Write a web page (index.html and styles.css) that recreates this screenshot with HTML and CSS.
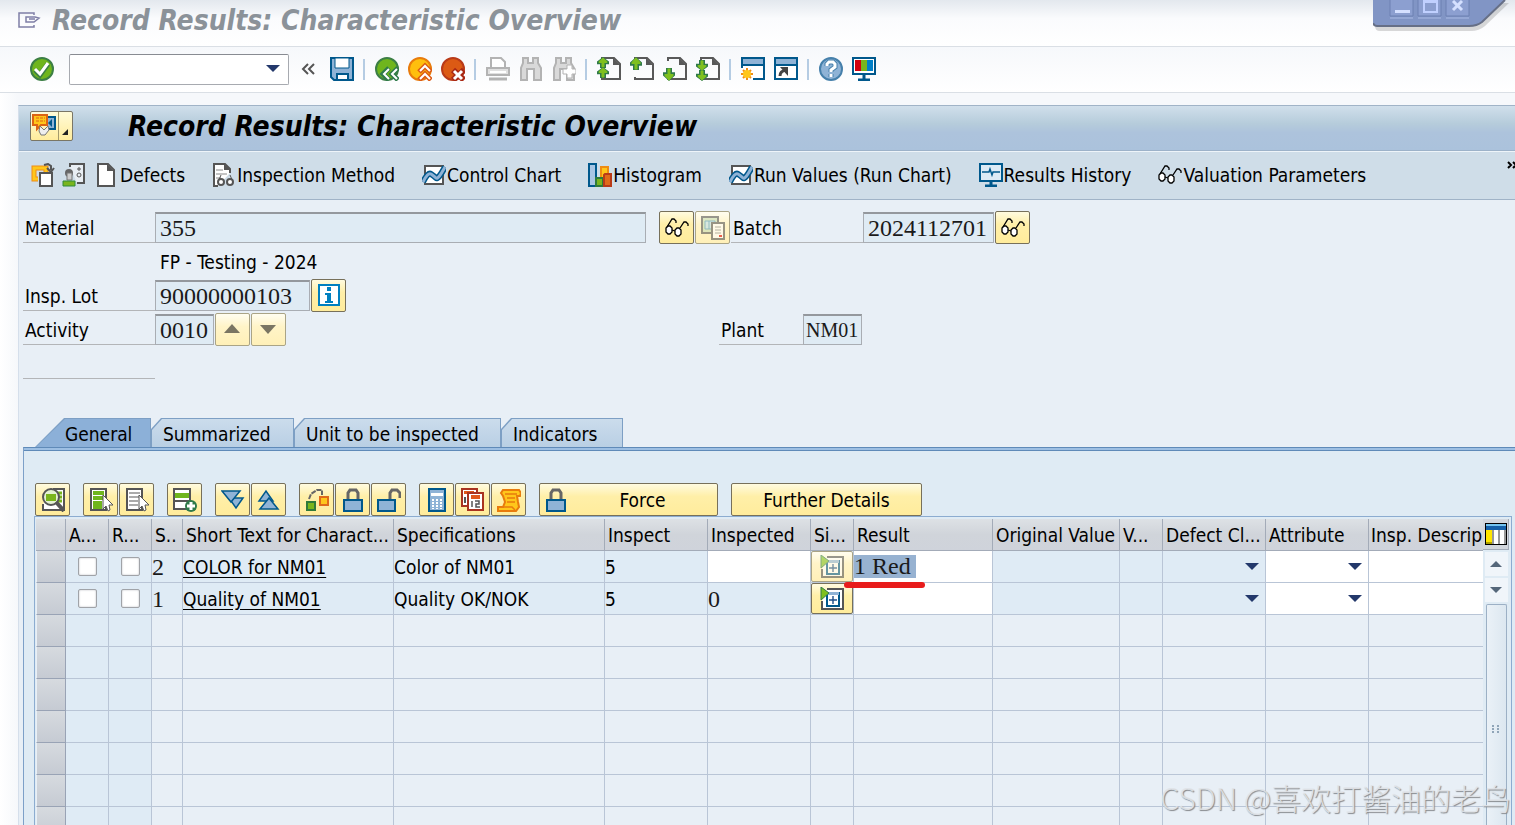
FILE: index.html
```html
<!DOCTYPE html>
<html lang="en">
<head>
    <meta charset="UTF-8">
    <meta name="viewport" content="width=device-width, initial-scale=1.0">
    <title>Record Results: Characteristic Overview</title>
    <link rel="stylesheet" href="styles.css">
</head>
<body>
    <!-- shared icons -->
    <svg class="defs" aria-hidden="true">
        <symbol id="i-glasses" viewBox="0 0 24 24">
            <g fill="#fff" stroke="#000" stroke-width="1.3">
                <path d="M3 10h2l2 2v4l-2 2H3l-2-2v-4z"/>
                <path d="M12 12h2l2 2v4l-2 2h-2l-2-2v-4z"/>
                <path d="M2 11l5-8h2l2 2v2M7 14l3 1M15 12l4-6h2l2 2v2" fill="none"/>
            </g>
        </symbol>
        <symbol id="i-chart" viewBox="0 0 24 24">
            <path d="M3 3h18v18H3z" fill="#fff" stroke="#555" stroke-width="2"/>
            <path d="M1 19q5-10 8-8t5 4 9-11" fill="none" stroke="#00588c" stroke-width="6"/>
            <path d="M1 19q5-10 8-8t5 4 9-11" fill="none" stroke="#8fb3d6" stroke-width="3"/>
        </symbol>
        <symbol id="i-page" viewBox="0 0 24 24">
            <path d="M5 4V1h12l6 6v15H5v-2" fill="none" stroke="#595959" stroke-width="2"/>
            <path d="M16 1v7h7z" fill="#595959"/>
        </symbol>
        <symbol id="i-up" viewBox="0 0 12 12" preserveAspectRatio="none">
            <path d="M6 0l6 5v3H9v4H3V8H0V5z" fill="#2f7a4a"/>
            <path d="M6 1l4 4v1H7v5H5V6H2V5z" fill="#7fc01f" stroke="#7fc01f"/>
        </symbol>
        <symbol id="i-binoc" viewBox="0 0 24 24">
            <path d="M4 1h5v5h5V1h5v5l3 5v12h-7V12H8v11H2V11l2-5z" fill="#d9d9d9" stroke="#b3b3b3" stroke-width="2"/>
        </symbol>
        <symbol id="i-insert" viewBox="0 0 24 24">
            <path d="M7 2h16v20H2v-8" fill="#fff" stroke="#555" stroke-width="2"/>
            <path d="M7 6h12v13H7z" fill="#fff" stroke="#00588c" stroke-width="2"/>
            <path d="M7 5h12v3H7z" fill="#8fb3d6"/>
            <path d="M13 9v8M9 13h8" stroke="#1e4f8a" stroke-width="1.4"/>
            <path d="M1 0l8 6-8 7z" fill="#7fc01f" stroke="#2f7a4a"/>
        </symbol>
        <symbol id="i-lock" viewBox="0 0 24 24">
            <path d="M7 11V5l2-3h6l2 3v6" fill="none" stroke="#666" stroke-width="3"/>
            <path d="M3 12h18v11H3z" fill="#8fb3d6" stroke="#00588c" stroke-width="2"/>
        </symbol>
    </svg>

    <header class="titlebar">
        <svg class="exit-icon" viewBox="0 0 24 18"><path d="M17 4V2H2v14h15v-2M9 6h9l4 1-5 4H9zM12 8h6" fill="none" stroke="#7f7fa6" stroke-width="1.500"/></svg>
        <h1>Record Results: Characteristic Overview</h1>
    </header>

    <div class="window-controls">
        <svg viewBox="0 0 142 34">
            <path d="M2 0v23q0 5 5 5h91q8 0 14-5l24-23z" fill="#666" opacity=".25" transform="translate(0 3)"/>
            <path d="M0 0v22q0 4 4 4h92q8 0 13-4l23-22z" fill="#8195c5"/>
            <path d="M0 23q1 3 4 3h92q8 0 13-4l23-22" fill="none" stroke="#666f86" stroke-width="2"/>
            <path d="M17 0v16h23V0M45 0v16h23V0M73 0v16h23V0" fill="#8c9fd0" stroke="#6d80b2"/>
            <path d="M17 18h23M45 18h23M73 18h23" stroke="#a9bae4"/>
            <path d="M22 11.500h15" stroke="#d5e0ff" stroke-width="3"/>
            <path d="M51 1h13v11H51zM51 2h13" fill="none" stroke="#c0d0ff" stroke-width="2"/>
            <path d="M80 1l9 9M89 1l-9 9" stroke="#d5e0ff" stroke-width="3"/>
        </svg>
    </div>

    <nav class="toolbar" aria-label="System toolbar">
        <button aria-label="Enter"><svg viewBox="0 0 24 24"><circle cx="12" cy="12" r="11" fill="#6fb51d" stroke="#3c7f45" stroke-width="2"/><path d="M5 13l5 5L18 7" fill="none" stroke="#3c7f45" stroke-width="5"/><path d="M5 12l5 5L18 6" fill="none" stroke="#fff" stroke-width="3"/></svg></button>
        <span class="command"><select aria-label="Command"><option></option></select></span>
        <button class="collapse" aria-label="Collapse"><svg viewBox="0 0 15 12"><path d="M7 1L2 6l5 5M13 1L8 6l5 5" fill="none" stroke="#555" stroke-width="2"/></svg></button>
        <button aria-label="Save"><svg viewBox="0 0 24 24"><path d="M1 1h22v22H4l-3-3z" fill="#8fb3d6" stroke="#00588c" stroke-width="2"/><path d="M5 1h14v10H5z" fill="#fff" stroke="#00588c"/><path d="M7 17h11v6H7z" fill="#fff" stroke="#00588c" stroke-width="2"/></svg></button>
        <i class="sep"></i>
        <button aria-label="Back"><svg viewBox="0 0 24 24"><circle cx="12" cy="12" r="11" fill="#6fb51d" stroke="#3c7f45" stroke-width="2"/><path d="M14 11l-6 6 6 6M23 11l-6 6 6 6" fill="none" stroke="#2f7a4a" stroke-width="5"/><path d="M14 12l-5 5 5 5M22 12l-5 5 5 5" fill="none" stroke="#fff" stroke-width="2"/></svg></button>
        <button aria-label="Exit"><svg viewBox="0 0 24 24"><circle cx="12" cy="12" r="11" fill="#ffbf0d" stroke="#e87b0c" stroke-width="2"/><path d="M11 15l6-6 6 6M11 23l6-6 6 6" fill="none" stroke="#dc5a14" stroke-width="5"/><path d="M12 14l5-5 5 5M12 22l5-5 5 5" fill="none" stroke="#fff" stroke-width="2"/></svg></button>
        <button aria-label="Cancel"><svg viewBox="0 0 24 24"><circle cx="12" cy="12" r="11" fill="#dc5a14" stroke="#b93a18" stroke-width="2"/><path d="M12 13l11 10M23 13L12 23" stroke="#a92814" stroke-width="6"/><path d="M13 14l8 8M21 14l-8 8" stroke="#fff" stroke-width="3"/></svg></button>
        <i class="sep"></i>
        <button aria-label="Print"><svg viewBox="0 0 24 24"><path d="M5 11V1h10l4 4v6" fill="#fff" stroke="#b3b3b3" stroke-width="2"/><path d="M1 11h22v7H1z" fill="#e0e0e0" stroke="#b3b3b3" stroke-width="2"/><path d="M4 15h16" stroke="#fff" stroke-width="2"/><path d="M3 22h18" stroke="#b3b3b3" stroke-width="3"/></svg></button>
        <button aria-label="Find"><svg viewBox="0 0 24 24"><use href="#i-binoc"/></svg></button>
        <button aria-label="Find next"><svg viewBox="0 0 24 24"><use href="#i-binoc"/><path d="M15 8h5v4h4v5h-4v4h-5v-4h-4v-5h4z" fill="#fff" stroke="#b3b3b3"/></svg></button>
        <i class="sep"></i>
        <button aria-label="First page"><svg viewBox="0 0 24 24"><use href="#i-page"/><use href="#i-up" width="12" height="11"/><use href="#i-up" y="10" width="12" height="11"/></svg></button>
        <button aria-label="Previous page"><svg viewBox="0 0 24 24"><use href="#i-page"/><use href="#i-up" width="12" height="13"/></svg></button>
        <button aria-label="Next page"><svg viewBox="0 0 24 24"><use href="#i-page"/><use href="#i-up" width="12" height="13" transform="translate(0 24) scale(1 -1)"/></svg></button>
        <button aria-label="Last page"><svg viewBox="0 0 24 24"><use href="#i-page"/><use href="#i-up" width="12" height="11" transform="translate(0 14) scale(1 -1)"/><use href="#i-up" width="12" height="11" transform="translate(0 24) scale(1 -1)"/></svg></button>
        <i class="sep"></i>
        <button aria-label="New session"><svg viewBox="0 0 24 24"><path d="M1 11V1h22v21H12" fill="#fff" stroke="#00588c" stroke-width="2"/><path d="M2 2h20v6H2z" fill="#8fb3d6"/><path d="M1 8h22" stroke="#00588c" stroke-width="2"/><path d="M6 11v12M0 17h12M2 13l8 8M10 13l-8 8" stroke="#f08c14" stroke-width="2"/><circle cx="6" cy="17" r="4" fill="#ffc61a"/></svg></button>
        <button aria-label="Shortcut"><svg viewBox="0 0 24 24"><path d="M1 1h22v21H1z" fill="#fff" stroke="#00588c" stroke-width="2"/><path d="M2 2h20v6H2z" fill="#8fb3d6"/><path d="M1 8h22" stroke="#00588c" stroke-width="2"/><path d="M6 19q0-5 6-6" fill="none" stroke="#444" stroke-width="3"/><path d="M6 10h8v9z" fill="#444"/></svg></button>
        <i class="sep"></i>
        <button aria-label="Help"><svg viewBox="0 0 24 24"><circle cx="12" cy="12" r="11" fill="#8fb3d6" stroke="#4680ab" stroke-width="2"/><path d="M8 9V7l2-2h4l2 2v3l-4 3v2M12 17v3" fill="none" stroke="#4680ab" stroke-width="5"/><path d="M8 9V7l2-2h4l2 2v3l-4 3v2M12 17v3" fill="none" stroke="#fff" stroke-width="3"/></svg></button>
        <button aria-label="Customize layout"><svg viewBox="0 0 24 24"><path d="M1 1h22v16H1z" fill="#fff" stroke="#00588c" stroke-width="2"/><path d="M3 3h6v11H3z" fill="#d00010"/><path d="M9 3h6v11H9z" fill="#7ab51d"/><path d="M15 3h6v11h-6z" fill="#0080c8"/><path d="M12 17v5M6 23h12" stroke="#00588c" stroke-width="3"/></svg></button>
    </nav>

    <main class="frame">
        <div class="screen-title">
            <button class="services" aria-label="Services for object">
                <svg viewBox="0 0 24 24"><path d="M14 3h9v12h-7" fill="#8fb3d6" stroke="#00588c" stroke-width="2"/><path d="M20 5v8l-4-4z" fill="#00588c"/><path d="M1 1h14v10H9l-4 4v-4H1z" fill="#ffc61a" stroke="#dc6414" stroke-width="2"/><path d="M4 4h9M4 7h9" stroke="#dc6414" stroke-dasharray="3 1"/><path d="M8 12l4 4 4-4 1 4-4 5H9l-2-4z" fill="#eee" stroke="#777"/></svg>
                <span class="corner"></span>
            </button>
            <h2>Record Results: Characteristic Overview</h2>
        </div>

        <nav class="app-toolbar" aria-label="Application toolbar">
            <div class="icon-pair">
                <button aria-label="Choose"><svg viewBox="0 0 24 24"><path d="M7 16H3V5h12v4" fill="none" stroke="#ee8c14" stroke-width="5"/><path d="M7 16H3V5h12v4" fill="none" stroke="#ffc61a" stroke-width="3"/><path d="M9 10h12v13H9z" fill="#fff" stroke="#555" stroke-width="2"/><path d="M13 2l4-1 3 2v4M16 5l4 4 3-4" fill="none" stroke="#555" stroke-width="2"/></svg></button>
                <button aria-label="User"><svg viewBox="0 0 24 24"><path d="M8 4V1h14v19h-7" fill="#e9eef3" stroke="#555" stroke-width="2"/><path d="M17 4v4M15 6h4" stroke="#555"/><circle cx="17" cy="12" r="2" fill="none" stroke="#555"/><circle cx="7" cy="10" r="4" fill="#666"/><path d="M5 10h5v7H5z" fill="#ccc" stroke="#777"/><path d="M1 18h12v5H1z" fill="#7ab51d" stroke="#2f8a3a"/></svg></button>
            </div>
            <button><svg class="sheet" viewBox="0 0 20 24"><path d="M2 1h10l6 6v16H2z" fill="#fff" stroke="#555" stroke-width="2"/><path d="M11 1v7h7z" fill="#555"/></svg>Defects</button>
            <button><svg viewBox="0 0 24 24"><path d="M6 23H2V1h11l5 5v4" fill="#fff" stroke="#555" stroke-width="2"/><path d="M12 1v6h7z" fill="#555"/><path d="M4 7h7M4 11h11M4 15h5" stroke="#888"/><path d="M9 12l-3 7M18 12l3 7" stroke="#555" fill="none"/><g fill="#fff" stroke="#555" stroke-width="2"><circle cx="9" cy="19" r="3"/><circle cx="18" cy="19" r="3"/></g></svg>Inspection Method</button>
            <button><svg viewBox="0 0 24 24"><use href="#i-chart"/></svg>Control Chart</button>
            <button><svg viewBox="0 0 24 24"><path d="M1 1h7v22H1z" fill="#a9c6e4" stroke="#00588c" stroke-width="2"/><path d="M13 4h7v13h-7z" fill="#ffc61a" stroke="#ee8c14" stroke-width="2"/><path d="M8 15h7v8H8z" fill="#7ab51d" stroke="#2f7a3a" stroke-width="2"/><path d="M17 11h6v12h-7V12z" fill="#e06a1a" stroke="#b93a18" stroke-width="2"/></svg>Histogram</button>
            <button><svg viewBox="0 0 24 24"><use href="#i-chart"/></svg>Run Values (Run Chart)</button>
            <button><svg viewBox="0 0 24 24"><path d="M1 1h22v17H1z" fill="#dceaf5" stroke="#00588c" stroke-width="2"/><path d="M3 9h7l1-3 2 6 1-3h7" fill="none" stroke="#00588c" stroke-width="1.500"/><path d="M12 18v4M6 23h12" stroke="#00588c" stroke-width="3"/></svg>Results History</button>
            <button><svg viewBox="0 0 24 24"><use href="#i-glasses"/></svg>Valuation Parameters</button>
            <button class="more" aria-label="More"><svg viewBox="0 0 10 8"><path d="M1 1l3 3-3 3M6 1l3 3-3 3" fill="none" stroke="#000" stroke-width="2"/></svg></button>
        </nav>

        <form class="details">
            <div class="row">
                <label for="material">Material</label>
                <input id="material" class="field w-long" value="355" readonly>
                <div class="buttons spaced">
                    <button type="button" class="btn" aria-label="Display material"><svg viewBox="0 0 24 24"><use href="#i-glasses"/></svg></button>
                    <button type="button" class="btn off" aria-label="Documents"><svg viewBox="0 0 24 24"><path d="M1 1h16v16H1z" fill="#c8ddb4" stroke="#555" stroke-width="2"/><path d="M4 5h10v8H4zM8 5v8" fill="#bfe0ec" stroke="#4b96b8"/><path d="M11 7h12v16H11z" fill="#fff" stroke="#555" stroke-width="2"/><path d="M14 11h6M14 14h6M14 17h6" stroke="#888"/><path d="M18 19h3v2h-3z" fill="#d00"/></svg></button>
                </div>
                <label for="batch">Batch</label>
                <input id="batch" class="field w-batch" value="2024112701" readonly>
                <div class="buttons">
                    <button type="button" class="btn" aria-label="Display batch"><svg viewBox="0 0 24 24"><use href="#i-glasses"/></svg></button>
                </div>
            </div>
            <div class="row"><p class="material-text">FP - Testing - 2024</p></div>
            <div class="row">
                <label for="lot">Insp. Lot</label>
                <input id="lot" class="field w-lot" value="90000000103" readonly>
                <div class="buttons">
                    <button type="button" class="btn" aria-label="Lot information"><svg viewBox="0 0 24 24"><path d="M2 1h20v20H2z" fill="#fff" stroke="#0080c0" stroke-width="2"/><path d="M10 3h4v4h-4zM8 9h6v8h2v2H8v-2h2v-6H8z" fill="#0080c0"/></svg></button>
                </div>
            </div>
            <div class="row">
                <label for="activity">Activity</label>
                <input id="activity" class="field w-short" value="0010" readonly>
                <div class="buttons">
                    <button type="button" class="btn off" aria-label="Previous activity"><svg viewBox="0 0 24 24"><path d="M3 15L11 6l8 9z" fill="#222"/></svg></button>
                    <button type="button" class="btn off" aria-label="Next activity"><svg viewBox="0 0 24 24"><path d="M3 7l8 9 8-9z" fill="#222"/></svg></button>
                </div>
                <label for="plant" class="plant-label">Plant</label>
                <input id="plant" class="field w-short plant" value="NM01" readonly>
            </div>
            <div class="row"><span class="rule"></span></div>
        </form>

        <div class="tabs" role="tablist">
            <button class="tab active" role="tab" aria-selected="true">General</button>
            <button class="tab w-summarized" role="tab">Summarized</button>
            <button class="tab w-unit" role="tab">Unit to be inspected</button>
            <button class="tab w-indicators" role="tab">Indicators</button>
        </div>

        <section class="panel">
            <div class="panel-toolbar">
                <div class="buttons">
                    <button class="btn" aria-label="Details"><svg viewBox="0 0 24 24"><path d="M12 1h11v21H2v-6" fill="#fff" stroke="#555" stroke-width="2"/><path d="M14 5h7M14 9h7M14 13h7" stroke="#7ab51d" stroke-width="3"/><circle cx="10" cy="9" r="8" fill="#e4f2d2" stroke="#555" stroke-width="2"/><path d="M5 6h10v7H5z" fill="#7ab51d"/><path d="M15 14l8 9" stroke="#555" stroke-width="4"/></svg></button>
                </div>
                <div class="buttons">
                    <button class="btn" aria-label="Select all"><svg viewBox="0 0 24 24"><path d="M2 1h15v21H2z" fill="#fff" stroke="#555" stroke-width="2"/><path d="M4 5h11M4 10h11M4 15h9M4 19h9" stroke="#6fb51d" stroke-width="4"/><path d="M14 7v14l3-3 2 5 2-1-1-5h4z" fill="#fff" stroke="#555"/></svg></button>
                    <button class="btn" aria-label="Deselect all"><svg viewBox="0 0 24 24"><path d="M2 1h15v21H2z" fill="#fff" stroke="#555" stroke-width="2"/><path d="M4 5h11M4 9h11M4 13h9M4 17h9" stroke="#aaa" stroke-width="2"/><path d="M14 7v14l3-3 2 5 2-1-1-5h4z" fill="#fff" stroke="#555"/></svg></button>
                </div>
                <div class="buttons">
                    <button class="btn" aria-label="Insert row"><svg viewBox="0 0 24 24"><path d="M1 1h16v20H1z" fill="#fff" stroke="#555" stroke-width="2"/><path d="M2 5h14v5H2z" fill="#6fb51d"/><path d="M1 13h16" stroke="#555" stroke-width="2"/><circle cx="18" cy="18" r="6" fill="#2f7a4a"/><path d="M18 14v8M14 18h8" stroke="#fff" stroke-width="3"/></svg></button>
                </div>
                <div class="buttons">
                    <button class="btn" aria-label="Next characteristic"><svg viewBox="0 0 24 24"><g fill="#8fb3d6" stroke="#00588c" stroke-width="1.500"><path d="M8 10h14l-7 10z"/><path d="M1 3h18l-9 11z"/></g></svg></button>
                    <button class="btn" aria-label="Previous characteristic"><svg viewBox="0 0 24 24"><g fill="#8fb3d6" stroke="#00588c" stroke-width="1.500"><path d="M2 13h14L9 3z"/><path d="M3 21h18l-9-11z"/></g></svg></button>
                </div>
                <div class="buttons">
                    <button class="btn" aria-label="Replace"><svg viewBox="0 0 24 24"><path d="M2 14h8v8H2z" fill="#7ab51d" stroke="#2f7a3a" stroke-width="2"/><path d="M15 9h8v8h-8z" fill="#ffc61a" stroke="#e06a1a" stroke-width="2"/><path d="M4 11l2-5 6-4h5v5" fill="none" stroke="#666" stroke-width="2" stroke-dasharray="5 1"/></svg></button>
                    <button class="btn" aria-label="Lock"><svg viewBox="0 0 24 24"><use href="#i-lock"/></svg></button>
                    <button class="btn" aria-label="Unlock"><svg viewBox="0 0 24 24"><path d="M13 11V5l2-3h5l3 3v5" fill="none" stroke="#666" stroke-width="3"/><path d="M1 12h17v11H1z" fill="#8fb3d6" stroke="#00588c" stroke-width="2"/></svg></button>
                </div>
                <div class="buttons">
                    <button class="btn" aria-label="Calculate"><svg viewBox="0 0 24 24"><path d="M4 1h16v22H4z" fill="#8fb3d6" stroke="#00588c" stroke-width="2"/><path d="M6 5h12v3H6z" fill="#fff"/><path d="M8 11v10M12 11v10M16 11v10" stroke="#fff" stroke-width="2" stroke-dasharray="2 1"/></svg></button>
                    <button class="btn" aria-label="Dates"><svg viewBox="0 0 24 24"><path d="M1 1h15v17H1z" fill="#fff" stroke="#a93320" stroke-width="2"/><path d="M3 3h10v3H3z" fill="#e0581a"/><path d="M4 9v6" stroke="#555" stroke-width="2"/><path d="M7 5h15v17H7z" fill="#fff" stroke="#a93320" stroke-width="2"/><path d="M10 7h9v4h-9z" fill="#e0581a"/><path d="M11 13v6M14 13h4v3h-3v3h4" fill="none" stroke="#555" stroke-width="1.500"/></svg></button>
                    <button class="btn" aria-label="Log"><svg viewBox="0 0 24 24"><path d="M6 2h16l2 3-1 3h-3l1 6 1 5-3 4H1v-4h5l2-5-2-6-2-3z" fill="#ffc61a" stroke="#e87b0c" stroke-width="2"/><path d="M8 6h12M10 10h8M10 14h8M2 19h13l3 3" fill="none" stroke="#e87b0c" stroke-width="1.500"/></svg></button>
                </div>
                <button class="btn text-btn force"><svg viewBox="0 0 24 24"><use href="#i-lock"/></svg><span>Force</span></button>
                <button class="btn text-btn">Further Details</button>
            </div>

            <div class="grid">
                <div class="table-wrap">
                    <table>
                        <colgroup>
                            <col class="c-sel"><col class="c-tiny"><col class="c-tiny"><col class="c-s"><col class="c-text"><col class="c-text"><col class="c-mid"><col class="c-mid"><col class="c-tiny"><col class="c-result"><col class="c-orig"><col class="c-tiny"><col class="c-mid"><col class="c-mid"><col>
                        </colgroup>
                        <thead>
                            <tr>
                                <th></th><th>A...</th><th>R...</th><th>S..</th><th>Short Text for Charact...</th><th>Specifications</th><th>Inspect</th><th>Inspected</th><th>Si...</th><th>Result</th><th>Original Value</th><th>V...</th><th>Defect Cl...</th><th>Attribute</th><th>Insp. Descrip</th>
                            </tr>
                        </thead>
                        <tbody>
                            <tr class="filled">
                                <td></td>
                                <td><input type="checkbox" aria-label="Accept row 2"></td>
                                <td><input type="checkbox" aria-label="Reject row 2"></td>
                                <td class="num">2</td>
                                <td><a href="#">COLOR for NM01</a></td>
                                <td>Color of NM01</td>
                                <td>5</td>
                                <td class="edit"></td>
                                <td><button class="btn cell-btn off" aria-label="Single results"><svg viewBox="0 0 24 24"><use href="#i-insert"/></svg></button></td>
                                <td class="edit marked"><input class="result" value="1 Red" aria-label="Result"></td>
                                <td></td>
                                <td></td>
                                <td><span class="drop"><select aria-label="Defect class"><option></option></select></span></td>
                                <td class="edit"><span class="drop"><select aria-label="Attribute"><option></option></select></span></td>
                                <td class="edit"></td>
                            </tr>
                            <tr class="filled">
                                <td></td>
                                <td><input type="checkbox" aria-label="Accept row 1"></td>
                                <td><input type="checkbox" aria-label="Reject row 1"></td>
                                <td class="num">1</td>
                                <td><a href="#">Quality of NM01</a></td>
                                <td>Quality OK/NOK</td>
                                <td>5</td>
                                <td class="num">0</td>
                                <td><button class="btn cell-btn" aria-label="Single results"><svg viewBox="0 0 24 24"><use href="#i-insert"/></svg></button></td>
                                <td class="edit"></td>
                                <td></td>
                                <td></td>
                                <td><span class="drop"><select aria-label="Defect class"><option></option></select></span></td>
                                <td class="edit"><span class="drop"><select aria-label="Attribute"><option></option></select></span></td>
                                <td class="edit"></td>
                            </tr>
                            <tr><td></td><td></td><td></td><td></td><td></td><td></td><td></td><td></td><td></td><td></td><td></td><td></td><td></td><td></td><td></td></tr>
                            <tr><td></td><td></td><td></td><td></td><td></td><td></td><td></td><td></td><td></td><td></td><td></td><td></td><td></td><td></td><td></td></tr>
                            <tr><td></td><td></td><td></td><td></td><td></td><td></td><td></td><td></td><td></td><td></td><td></td><td></td><td></td><td></td><td></td></tr>
                            <tr><td></td><td></td><td></td><td></td><td></td><td></td><td></td><td></td><td></td><td></td><td></td><td></td><td></td><td></td><td></td></tr>
                            <tr><td></td><td></td><td></td><td></td><td></td><td></td><td></td><td></td><td></td><td></td><td></td><td></td><td></td><td></td><td></td></tr>
                            <tr><td></td><td></td><td></td><td></td><td></td><td></td><td></td><td></td><td></td><td></td><td></td><td></td><td></td><td></td><td></td></tr>
                            <tr><td></td><td></td><td></td><td></td><td></td><td></td><td></td><td></td><td></td><td></td><td></td><td></td><td></td><td></td><td></td></tr>
                        </tbody>
                    </table>
                </div>
                <div class="side">
                    <button class="config" aria-label="Configuration"><svg viewBox="0 0 22 22"><path d="M0 0h22v22H0z"/><path d="M1 1h20v20H1z" fill="#fff"/><path d="M1 1h20v2H1z" fill="#74c4f0"/><path d="M1 3h20v4H1z" fill="#1560a8"/><path d="M1 7h6v12H1z" fill="#ffe600"/><path d="M1 19h6v2H1z" fill="#b0a000"/><path d="M8 7v14M14 7v14M20 7v14" stroke="#999" stroke-width="2"/></svg></button>
                    <button class="scroll" aria-label="Scroll up"><svg viewBox="0 0 12 8"><path d="M0 7l6-6 6 6z" fill="#55677a"/></svg></button>
                    <button class="scroll" aria-label="Scroll down"><svg viewBox="0 0 12 8"><path d="M0 1l6 6 6-6z" fill="#55677a"/></svg></button>
                    <div class="thumb"><svg viewBox="0 0 8 8"><path d="M1 0v8M6 0v8" stroke="#90a5b8" stroke-width="2" stroke-dasharray="2 1"/></svg></div>
                </div>
            </div>
        </section>
    </main>
    <div class="watermark">CSDN @喜欢打酱油的老鸟</div>
</body>
</html>
```
FILE: styles.css
```css
* {
    box-sizing: border-box;
}

body {
    position: relative;
    display: flex;
    flex-direction: column;
    height: 100vh;
    margin: 0;
    overflow: hidden;
    background: linear-gradient(to right, #ffffff, #f6f8fb 18px);
    color: #000;
    font-family: "DejaVu Sans Condensed", "Noto Sans", sans-serif;
    font-size: 19px;
}

button, select, input {
    font: inherit;
    color: inherit;
    margin: 0;
    padding: 0;
}

button {
    display: flex;
    align-items: center;
    border: 0;
    background: none;
    white-space: nowrap;
}

svg {
    display: block;
    width: 24px;
    height: 24px;
    flex-shrink: 0;
}

h1, h2 {
    margin: 0;
    font-size: 28px;
    font-style: italic;
    font-weight: bold;
    white-space: nowrap;
}

.defs {
    position: absolute;
    width: 0;
    height: 0;
}

.titlebar {
    display: flex;
    align-items: center;
    gap: 11px;
    height: 47px;
    padding: 0 17px 6px;
    border-bottom: 1px solid #dadfe5;
    background: linear-gradient(#e3e8ee, #fafbfd 40%, #ffffff);
}

.titlebar h1 {
    color: #8b9299;
}

.exit-icon {
    height: 18px;
}

.window-controls {
    position: absolute;
    top: 0;
    right: 0;
}

.window-controls svg {
    width: 142px;
    height: 34px;
}

.toolbar {
    display: flex;
    align-items: center;
    gap: 9px;
    height: 46px;
    padding: 0 30px 1px;
    border-bottom: 1px solid #dadfe5;
    background: linear-gradient(#f6f8fb, #ffffff);
}

.sep {
    width: 3px;
    height: 21px;
    border-left: 2px solid #b5cce3;
}

.command {
    position: relative;
    width: 220px;
    height: 31px;
    margin: 0 3px 0 6px;
}

.command select {
    width: 100%;
    height: 100%;
    border: 1px solid #a7aab0;
    border-top-color: #888b92;
    border-radius: 2px;
    background: #fff;
    appearance: none;
}

.command::after, .drop::after {
    content: "";
    position: absolute;
    top: 11px;
    right: 9px;
    border: 7px solid transparent;
    border-top-color: #23386b;
    border-bottom: 0;
    pointer-events: none;
}

.collapse {
    margin-right: 5px;
}

.collapse svg {
    width: 15px;
    height: 12px;
}

.frame {
    flex: 1;
    display: flex;
    flex-direction: column;
    min-height: 0;
    margin: 12px 0 0 18px;
    border: 1px solid #a0b3c7;
    border-right: 0;
    border-bottom: 0;
    border-left-color: #d5dfeb;
    background: #e8eff6;
}

.screen-title {
    display: flex;
    align-items: center;
    gap: 55px;
    height: 45px;
    padding: 0 11px 4px;
    border-bottom: 1px solid #9db2c9;
    background: linear-gradient(#d0dfeb, #b6ccdb 40%, #adc3dc 60%, #abc2dc);
}

.services {
    height: 30px;
    width: 43px;
    padding-left: 1px;
    border: 1px solid #7a7666;
    border-radius: 2px;
    background: linear-gradient(#fffbd8, #ffec9c);
}

.corner {
    display: flex;
    align-items: flex-end;
    align-self: stretch;
    margin-left: 2px;
    padding-left: 3px;
    border-left: 1px solid #a39a6c;
}

.corner::after {
    content: "";
    margin-bottom: 5px;
    border-left: 6px solid transparent;
    border-bottom: 6px solid #222;
}

.app-toolbar {
    display: flex;
    align-items: center;
    gap: 27px;
    height: 49px;
    padding: 0 0 1px 12px;
    border-top: 1px solid #eef4f9;
    border-bottom: 1px solid #a0b3c7;
    background: #cfdde8;
    overflow: hidden;
}

.app-toolbar button {
    gap: 1px;
}

.icon-pair {
    display: flex;
    gap: 7px;
    margin-right: -17px;
}

.app-toolbar .sheet {
    width: 20px;
    margin-right: 3px;
}

.app-toolbar .more {
    align-self: flex-start;
    margin: 9px -2px 0 auto;
}

.more svg {
    width: 10px;
    height: 8px;
}

.details {
    display: flex;
    flex-direction: column;
    gap: 1px;
    padding: 11px 0 38px 4px;
}

.row {
    display: flex;
    align-items: center;
    height: 33px;
}

.row label, .rule {
    width: 132px;
    height: 31px;
    padding-left: 2px;
    border-bottom: 1px solid #b3b5b8;
    line-height: 32px;
}

.field {
    height: 31px;
    padding: 0 4px;
    border: 1px solid #a9adb3;
    border-top: 2px solid #94989d;
    background: #dfebf4;
    color: #1a1a1a;
    font-family: "Liberation Serif", serif;
    font-size: 24px;
    outline: 0;
}

.w-long {
    width: 491px;
}

.w-batch {
    width: 131px;
}

.w-lot {
    width: 155px;
}

.w-short {
    width: 59px;
}

.plant {
    padding: 0 2px;
    font-size: 20px;
}

.row .plant-label {
    width: 84px;
    margin-left: 432px;
}

.material-text {
    margin: 0 0 0 137px;
}

.buttons {
    display: flex;
    gap: 1px;
    margin: 0 1px;
}

.buttons.spaced {
    margin-left: 13px;
}

.btn {
    justify-content: center;
    width: 35px;
    height: 33px;
    border: 1px solid #77705a;
    border-radius: 2px;
    background: linear-gradient(#fffbe0, #ffefa8 40%, #ffec9c);
}

.btn.off {
    border-color: #aaa486;
    background: linear-gradient(#fffdf0, #fff4c8 40%, #fff0b8);
}

.off svg {
    opacity: 0.6;
}

.tabs {
    display: flex;
    padding-left: 16px;
}

.tab {
    position: relative;
    z-index: 0;
    height: 29px;
    padding: 2px 0 0 12px;
}

.tab::before, .tab::after {
    content: "";
    position: absolute;
    z-index: -1;
    inset: 0;
    background: #7d9fc4;
    clip-path: polygon(0 11px, 10px 0, 100% 0, 100% 100%, 0 100%);
}

.tab::after {
    inset: 1px 1px 0 1px;
    background: linear-gradient(#cbdcec, #b9cfe4);
}

.tab.active {
    width: 116px;
    padding-left: 30px;
}

.tab.active::before, .tab.active::after {
    clip-path: polygon(0 100%, 29px 0, 100% 0, 100% 100%);
}

.tab.active::after {
    background: #8cb0d8;
}

.w-summarized {
    width: 143px;
}

.w-unit {
    width: 207px;
}

.w-indicators {
    width: 122px;
}

.panel {
    flex: 1;
    display: flex;
    flex-direction: column;
    min-height: 0;
    margin-left: 4px;
    padding: 35px 3px 0 10px;
    border-top: 1px solid #5f8ab8;
    border-left: 1px solid #7da0c8;
    background: linear-gradient(#9dbfe3 2px, #5f8ab8 2px, #5f8ab8 3px, #dfebf4 3px);
}

.panel-toolbar {
    display: flex;
    gap: 13px;
    padding-left: 1px;
}

.panel-toolbar .buttons {
    margin: 0;
}

.text-btn {
    width: 191px;
}

.force {
    justify-content: flex-start;
    width: 179px;
    padding-left: 4px;
}

.force span {
    flex: 1;
    text-align: center;
}

.grid {
    flex: 1;
    display: flex;
    min-height: 0;
    padding: 2px 0 0 1px;
    border: 1px solid #8cacd0;
    border-bottom: 0;
}

.table-wrap {
    flex: 1;
    min-width: 0;
    overflow: hidden;
}

table {
    width: 100%;
    table-layout: fixed;
    border-collapse: separate;
    border-spacing: 0;
}

.c-sel { width: 30px; }
.c-tiny { width: 43px; }
.c-s { width: 31px; }
.c-text { width: 211px; }
.c-mid { width: 103px; }
.c-result { width: 139px; }
.c-orig { width: 127px; }

th, td {
    height: 32px;
    padding: 0;
    border-right: 1px solid #b9c5d6;
    border-bottom: 1px solid #b9c5d6;
    background: #e8eff6;
    overflow: hidden;
    white-space: nowrap;
    text-align: left;
    line-height: 24px;
}

th {
    padding-left: 3px;
    border-color: #a3abb8;
    background: linear-gradient(#dde1e5, #d0d4da 50%, #cfd3db);
    font-weight: normal;
}

th:last-child {
    padding-left: 2px;
}

td:first-child {
    border-color: #99a3b5;
    border-left: 1px solid #e8eff6;
    background: linear-gradient(#d6dadf, #c6cbd3);
}

td:nth-child(2), td:nth-child(3), .filled td:not(:first-child) {
    background: #dfebf5;
}

.filled td.edit {
    background: #fff;
}

th:last-child, td:last-child {
    border-right: 0;
}

td a {
    color: inherit;
    text-underline-offset: 3px;
}

.num {
    color: #1a1a1a;
    font-family: "Liberation Serif", serif;
    font-size: 24px;
}

td input[type="checkbox"] {
    display: block;
    width: 19px;
    height: 19px;
    margin: 0 auto;
    border: 1px solid #a0a3a8;
    border-radius: 2px;
    background: #fff;
    box-shadow: inset 0 0 2px #b5b8bd;
    appearance: none;
}

.cell-btn {
    width: 42px;
    height: 31px;
}

.marked {
    position: relative;
    overflow: visible;
}

/* red marker under the selected value */
.marked::after {
    content: "";
    position: absolute;
    left: -10px;
    bottom: -6px;
    z-index: 1;
    width: 81px;
    height: 6px;
    border-radius: 3px;
    background: #e81c1c;
}

.result {
    display: block;
    width: 62px;
    height: 23px;
    border: 0;
    background: #97b2d1;
    color: #1a1a1a;
    font-family: "Liberation Serif", serif;
    font-size: 24px;
    outline: 0;
}

.drop {
    position: relative;
    display: block;
    height: 28px;
}

.drop select {
    width: 100%;
    height: 100%;
    border: 0;
    background: none;
    appearance: none;
}

.drop::after {
    top: 10px;
    right: 6px;
}

.side {
    display: flex;
    flex-direction: column;
    align-items: center;
    gap: 2px;
    width: 28px;
    padding-right: 2px;
}

.side button {
    justify-content: center;
}

.config {
    width: 26px;
    height: 31px;
    border-right: 1px solid #a3abb8;
    border-bottom: 1px solid #a3abb8;
    background: #d3d7dd;
}

.config svg {
    width: 22px;
    height: 22px;
}

.scroll {
    width: 23px;
    height: 24px;
    background: #f0f5fa;
}

.scroll svg {
    width: 12px;
    height: 8px;
}

.thumb {
    flex: 1;
    display: flex;
    align-items: center;
    justify-content: center;
    width: 21px;
    padding-top: 28px;
    border: 1px solid #9cb0c5;
    border-bottom: 0;
    border-radius: 2px 2px 0 0;
    background: linear-gradient(to right, #eaf1f7, #dce7f0);
}

.thumb svg {
    width: 8px;
    height: 8px;
}

.watermark {
    position: absolute;
    right: 4px;
    bottom: 8px;
    color: rgba(225, 228, 232, 0.9);
    font-family: "Noto Sans CJK SC", sans-serif;
    font-size: 30px;
    font-weight: 300;
    line-height: 40px;
    text-shadow: 1px 1px 1px #85888c;
    white-space: nowrap;
}
```
